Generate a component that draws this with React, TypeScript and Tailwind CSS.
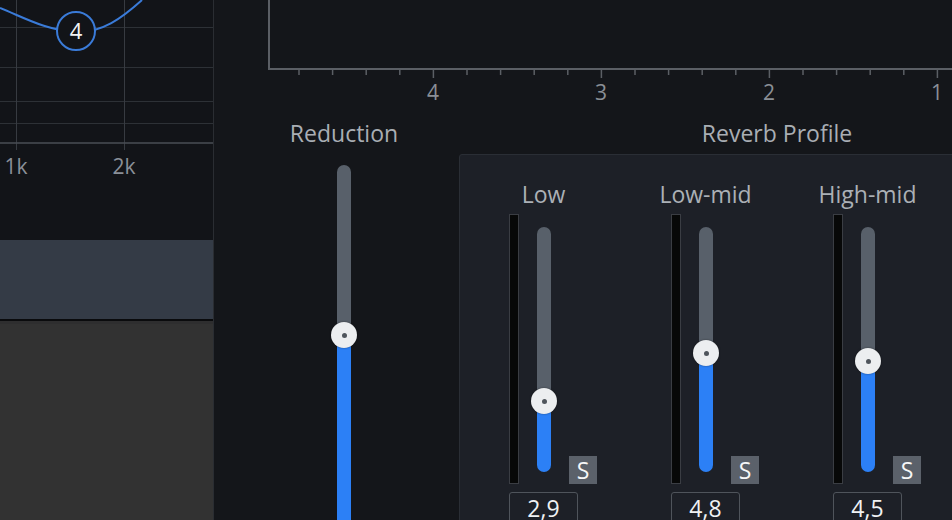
import React from "react";

const BANDS = [
  { name: "Low", value: "2,9", pos: 174 },
  { name: "Low-mid", value: "4,8", pos: 126 },
  { name: "High-mid", value: "4,5", pos: 134 },
];

const TRACK_H = 245;

function EqGraph() {
  return (
    <svg width="213" height="240" viewBox="0 0 213 240" className="block">
      {[27, 67, 101, 123].map((y) => (
        <line key={y} x1="0" x2="213" y1={y + 0.5} y2={y + 0.5} stroke="#2d3136" strokeWidth="1" />
      ))}
      {[16, 124].map((x) => (
        <line key={x} x1={x + 0.5} x2={x + 0.5} y1="0" y2="150" stroke="#373b41" strokeWidth="1" />
      ))}
      <line x1="0" x2="213" y1="143" y2="143" stroke="#4a4e54" strokeWidth="1.5" />
      <path
        d="M0 8 C 25 18, 45 30, 76 32 C 102 33, 122 18, 142 0"
        fill="none"
        stroke="#3a7bd8"
        strokeWidth="2"
      />
      <circle cx="76" cy="31" r="19" fill="#121418" stroke="#3a7bd8" strokeWidth="2" />
      <text
        x="76"
        y="39"
        textAnchor="middle"
        fill="#f2f3f5"
        fontSize="22"
        fontFamily="'Open Sans', sans-serif"
      >
        4
      </text>
      <text x="16" y="174" textAnchor="middle" fill="#8a9098" fontSize="21" fontFamily="'Open Sans', sans-serif">
        1k
      </text>
      <text x="124" y="174" textAnchor="middle" fill="#8a9098" fontSize="21" fontFamily="'Open Sans', sans-serif">
        2k
      </text>
    </svg>
  );
}

function AxisTicks() {
  const ticks = Array.from({ length: 20 }, (_, i) => 31 + i * 33.6);
  const labels = [
    { x: 165, t: "4" },
    { x: 333, t: "3" },
    { x: 501, t: "2" },
    { x: 669, t: "1" },
  ];
  return (
    <svg width="684" height="46" viewBox="0 0 684 46" className="block">
      {ticks.map((x, i) => {
        const major = (i + 1) % 5 === 0;
        return (
          <line
            key={i}
            x1={x}
            x2={x}
            y1="0"
            y2={major ? 8 : 5}
            stroke="#5b5f65"
            strokeWidth="1.5"
          />
        );
      })}
      {labels.map((l) => (
        <text
          key={l.t}
          x={l.x}
          y="30"
          textAnchor="middle"
          fill="#8a8f96"
          fontSize="21"
          fontFamily="'Open Sans', sans-serif"
        >
          {l.t}
        </text>
      ))}
    </svg>
  );
}

function Thumb({ top }: { top: number }) {
  return (
    <div
      className="absolute left-1/2 -translate-x-1/2 w-[26px] h-[26px] rounded-full bg-[#eceef0] flex items-center justify-center shadow-[0_0_2px_rgba(0,0,0,0.5)]"
      style={{ top }}
    >
      <div className="w-[5px] h-[5px] rounded-full bg-[#4f555c]" />
    </div>
  );
}

function BandColumn({ name, value, pos }: { name: string; value: string; pos: number }) {
  return (
    <div className="w-[162px] shrink-0 flex flex-col">
      <div className="w-[69px] h-[30px] flex justify-center leading-[28px] text-[23px] text-[#abb0b6] whitespace-nowrap">
        {name}
      </div>
      <div className="mt-[4px] flex items-end">
        <div className="w-[10px] h-[270px] bg-[#070808] border border-[#3a3d43]" />
        <div className="relative ml-[18px] mb-[12px] w-[14px] flex flex-col" style={{ height: TRACK_H }}>
          <div className="rounded-t-full bg-[#58606a]" style={{ height: pos }} />
          <div className="flex-1 rounded-b-full bg-[#2c80f6]" />
          <Thumb top={pos - 13} />
        </div>
        <div className="ml-[18px] w-[28px] h-[28px] bg-[#5b616a] flex items-center justify-center text-[23px] leading-none text-[#f6f7f8]">
          S
        </div>
      </div>
      <div className="mt-[8px] w-[69px] h-[34px] border border-[#4f545b] rounded-[3px] text-center text-[23px] leading-[30px] text-[#f0f2f4]">
        {value}
      </div>
    </div>
  );
}

export default function App() {
  return (
    <div className="w-[952px] h-[520px] flex overflow-hidden bg-[#14161a] font-['Open_Sans',sans-serif]">
      <div className="w-[214px] shrink-0 flex flex-col border-r border-[#2a2d32] bg-[#121418]">
        <EqGraph />
        <div className="h-[79px] bg-[#343b46]" />
        <div className="h-[2px] bg-[#0a0b0d]" />
        <div className="flex-1 bg-[#323232] border-t-[3px] border-[#2e2e2f]" />
      </div>

      <div className="flex-1 flex flex-col min-w-0">
        <div className="h-[116px] shrink-0 pl-[54px] flex flex-col">
          <div className="h-[70px] border-l-2 border-b-2 border-[#5b5f65]" />
          <AxisTicks />
        </div>

        <div className="flex-1 flex min-h-0">
          <div className="w-[245px] shrink-0 pl-[15px] flex flex-col items-center">
            <div className="h-[34px] leading-[34px] text-[23px] text-[#a9aeb4]">Reduction</div>
            <div className="relative mt-[15px] w-[14px] h-[400px] flex flex-col">
              <div className="h-[170px] rounded-t-full bg-[#58606a]" />
              <div className="flex-1 bg-[#2c80f6]" />
              <Thumb top={157} />
            </div>
          </div>

          <div className="w-[636px] shrink-0 flex flex-col">
            <div className="h-[34px] leading-[34px] text-[23px] text-center text-[#a9aeb4]">Reverb Profile</div>
            <div className="mt-[4px] flex-1 bg-[#1d2027] border border-[#2a2e35] rounded-tl-[3px] pl-[49px] pt-[25px] flex">
              {BANDS.map((b) => (
                <BandColumn key={b.name} {...b} />
              ))}
            </div>
          </div>
        </div>
      </div>
    </div>
  );
}
